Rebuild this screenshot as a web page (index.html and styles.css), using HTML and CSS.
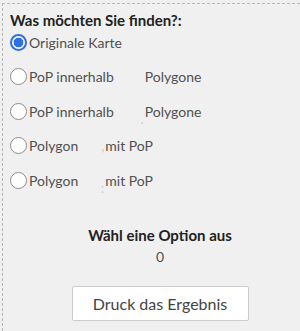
FILE: index.html
```html
<!DOCTYPE html>
<html>
<head>
<meta charset="utf-8">
<link rel="stylesheet" href="styles.css">
</head>
<body>
<div class="panel">
  <div class="title">Was möchten Sie finden?:</div>
  <div class="options">
    <label class="opt"><input type="radio" name="o" checked><span>Originale Karte</span></label>
    <label class="opt"><input type="radio" name="o"><span>PoP innerhalb</span><span class="gap g1"></span><span>Polygone</span></label>
    <label class="opt"><input type="radio" name="o"><span>PoP innerhalb</span><span class="gap g1"><i class="mark">.</i></span><span>Polygone</span></label>
    <label class="opt"><input type="radio" name="o"><span>Polygon</span><span class="gap g2"><i class="mark">'</i></span><span>mit PoP</span></label>
    <label class="opt"><input type="radio" name="o"><span>Polygon</span><span class="gap g2"><i class="mark">:</i></span><span>mit PoP</span></label>
  </div>
  <div class="result">
    <div class="result-title">Wähl eine Option aus</div>
    <div class="result-count">0</div>
    <button class="print">Druck das Ergebnis</button>
  </div>
</div>
</body>
</html>
```

FILE: styles.css
```css
html, body {
  margin: 0;
  padding: 0;
  background: #f0f0f0;
}
body {
  font-family: Lato, "Open Sans", sans-serif;
  color: #333;
  overflow: hidden;
}
.panel {
  margin: 3px 0 0 2px;
  width: 298px;
  height: 328px;
  border-top: 1px dashed #b8b8b8;
  border-left: 1px dashed #b8b8b8;
  box-sizing: border-box;
  padding: 7px 0 0 7px;
}
.title {
  font-weight: bold;
  font-size: 15px;
  color: #222;
  line-height: 18px;
}
.options {
  display: flex;
  flex-direction: column;
  gap: 14.5px;
  margin-top: 3px;
}
.opt {
  display: flex;
  align-items: center;
  font-size: 14px;
  color: #505050;
  height: 20px;
}
.opt input {
  appearance: none;
  -webkit-appearance: none;
  width: 17px;
  height: 17px;
  margin: 0 2px 0 0;
  border: 1.6px solid #8c8c8c;
  border-radius: 50%;
  background: #fff;
  box-sizing: border-box;
  flex: none;
}
.opt input:checked {
  border: 2px solid #2d6fe4;
  background: radial-gradient(circle, #2d6fe4 0 4.6px, #fff 5.2px);
}
.gap {
  display: inline-block;
  position: relative;
}
.g1 { width: 31px; }
.g2 { width: 27px; }
.mark {
  font-style: normal;
  color: #ccc;
  position: absolute;
  right: 1px;
  top: -1px;
}
.result {
  display: flex;
  flex-direction: column;
  align-items: center;
  margin-top: 36px;
  width: 300px;
}
.result-title {
  font-weight: bold;
  font-size: 15px;
  color: #222;
}
.result-count {
  font-size: 14px;
  color: #505050;
  margin-top: 4px;
}
.print {
  margin-top: 21px;
  width: 177px;
  height: 35px;
  background: #fff;
  border: 1px solid #ccc;
  border-radius: 2px;
  font-family: inherit;
  font-size: 16px;
  color: #444;
}
```
